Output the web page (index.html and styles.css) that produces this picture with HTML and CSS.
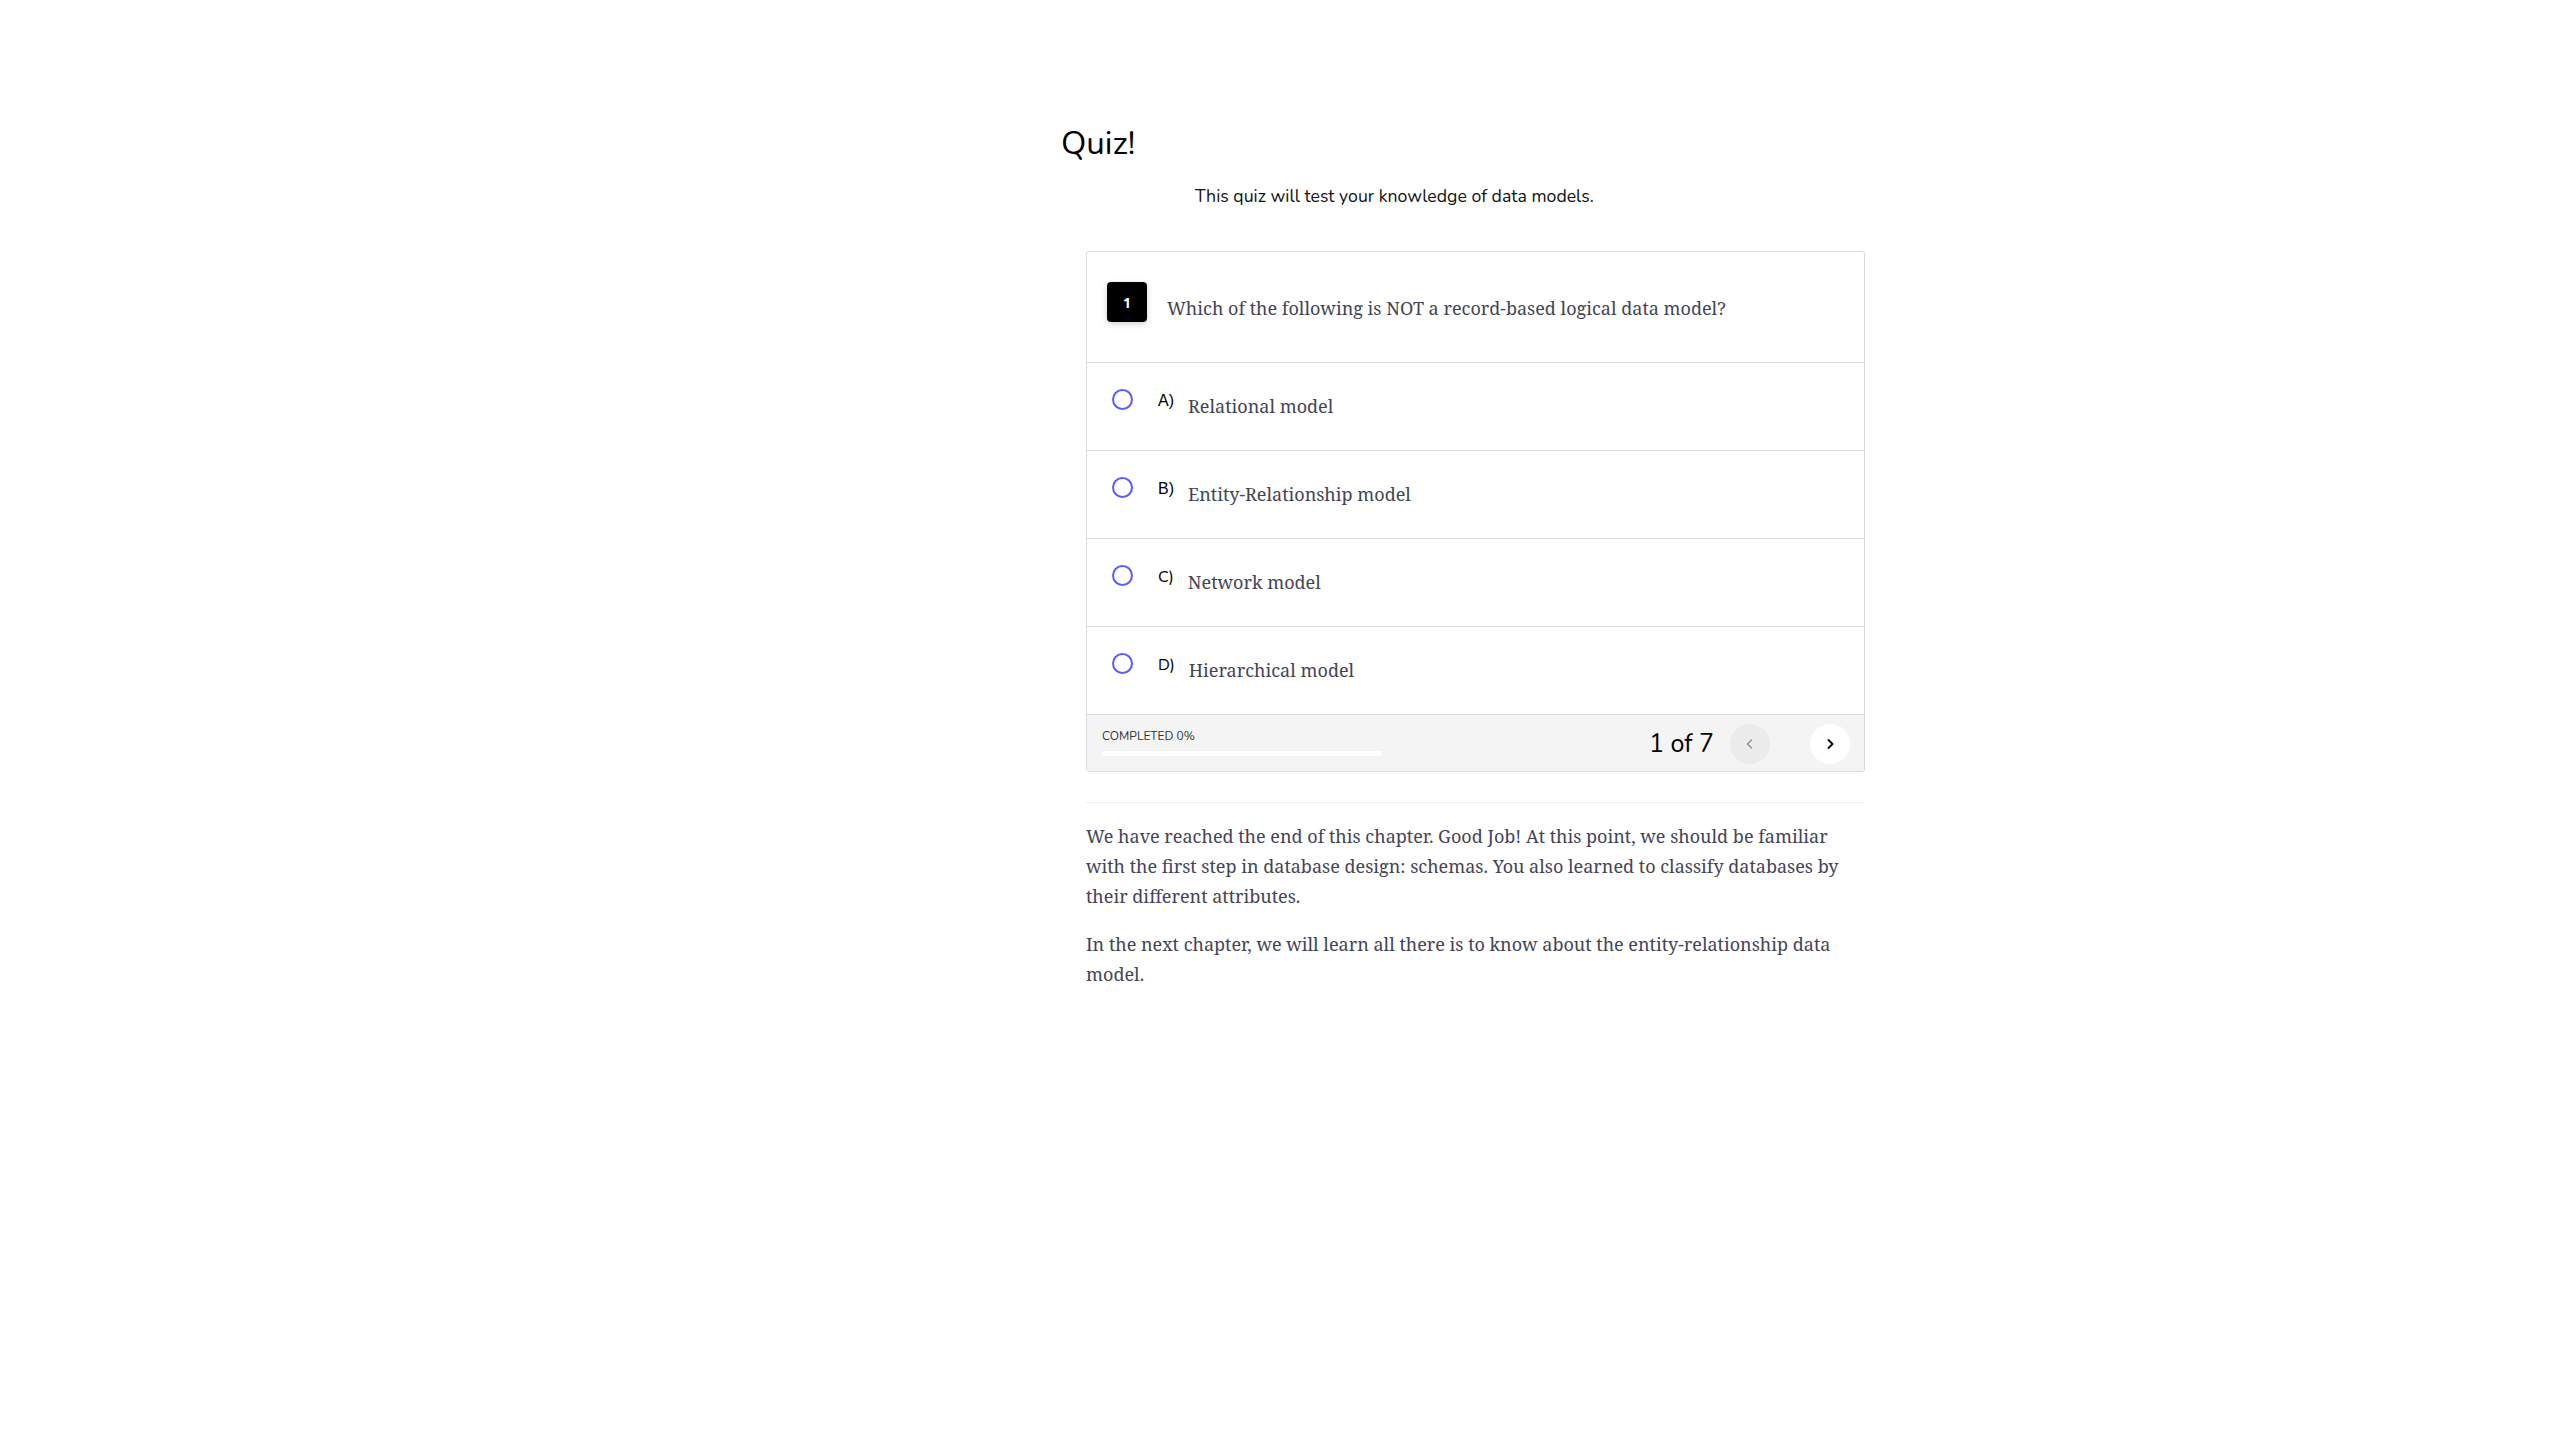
FILE: index.html
```html
<!DOCTYPE html>
<html lang="en">
<head>
<meta charset="utf-8">
<title>Quiz</title>
<link rel="stylesheet" href="styles.css">
</head>
<body>
<div class="layout">
  <div class="sidebar"></div>
  <main class="content">
    <h1 class="title">Quiz!</h1>
    <p class="subtitle">This quiz will test your knowledge of data models.</p>

    <section class="card">
      <div class="question">
        <div class="badge">1</div>
        <p class="question-text">Which of the following is NOT a record-based logical data model?</p>
      </div>

      <div class="option">
        <span class="radio"></span>
        <span class="label label-arial">A)</span>
        <span class="option-text">Relational model</span>
      </div>
      <div class="option">
        <span class="radio"></span>
        <span class="label label-arial">B)</span>
        <span class="option-text">Entity-Relationship model</span>
      </div>
      <div class="option">
        <span class="radio"></span>
        <span class="label label-round">C)</span>
        <span class="option-text">Network model</span>
      </div>
      <div class="option">
        <span class="radio"></span>
        <span class="label label-round">D)</span>
        <span class="option-text">Hierarchical model</span>
      </div>

      <div class="footer">
        <div class="progress">
          <div class="progress-label">COMPLETED 0%</div>
          <div class="progress-track"></div>
        </div>
        <div class="pager">
          <span class="pager-count">1 of 7</span>
          <button class="nav nav-prev" aria-label="Previous">
            <svg width="14" height="14" viewBox="0 0 14 14"><polyline points="8.5,3 4.5,7 8.5,11" fill="none" stroke="#8a8a8a" stroke-width="1.3" stroke-linecap="round" stroke-linejoin="round"/></svg>
          </button>
          <button class="nav nav-next" aria-label="Next">
            <svg width="14" height="14" viewBox="0 0 14 14"><polyline points="5.5,3 9.5,7 5.5,11" fill="none" stroke="#111" stroke-width="2" stroke-linecap="round" stroke-linejoin="round"/></svg>
          </button>
        </div>
      </div>
    </section>

    <hr class="divider">

    <div class="outro">
      <p>We have reached the end of this chapter. Good Job! At this point, we should be familiar with the first step in database design: schemas. You also learned to classify databases by their different attributes.</p>
      <p>In the next chapter, we will learn all there is to know about the entity-relationship data model.</p>
    </div>
  </main>
</div>
</body>
</html>
```

FILE: styles.css
```css
html, body {
  margin: 0;
  padding: 0;
  background: #ffffff;
}

body {
  font-family: "Nunito", "Lato", "Noto Sans", sans-serif;
  color: #000;
}

.layout {
  display: grid;
  grid-template-columns: 1061px 805px;
}

.content {
  padding-top: 122px;
}

.title {
  margin: 0;
  font-size: 33px;
  font-weight: 400;
  line-height: 44px;
  color: #000;
}

.subtitle {
  margin: 17px 0 0 134px;
  font-size: 17.7px;
  line-height: 26px;
  color: #111;
}

.card {
  margin: 42px 0 0 25px;
  width: 777px;
  border: 1px solid #dcdcdc;
  border-radius: 3px;
  background: #fff;
}

.question {
  display: flex;
  align-items: flex-start;
  padding: 30px 20px 40px 20px;
  border-bottom: 1px solid #dcdcdc;
}

.badge {
  flex: none;
  width: 40px;
  height: 40px;
  border-radius: 4px;
  background: #000;
  color: #fff;
  font-family: "Noto Sans", "DejaVu Sans", sans-serif;
  font-weight: 700;
  font-size: 14px;
  display: flex;
  align-items: center;
  justify-content: center;
  box-shadow: 0 2px 6px rgba(0, 0, 0, 0.18);
}

.question-text {
  margin: 14px 0 0 20px;
  font-family: "Noto Serif", "DejaVu Serif", serif;
  font-size: 18px;
  line-height: 24px;
  color: #444456;
}

.option {
  display: flex;
  align-items: flex-start;
  height: 61px;
  padding: 26px 0 0 25px;
  border-bottom: 1px solid #dcdcdc;
}

.radio {
  flex: none;
  width: 17px;
  height: 17px;
  border: 2px solid #5a5aff;
  border-radius: 50%;
}

.label {
  margin: 2px 0 0 25px;
  font-size: 16px;
  line-height: 20px;
  color: #000;
}

.label-arial {
  font-family: "Liberation Sans", Arial, sans-serif;
}

.label-round {
  font-family: "Nunito", "Lato", sans-serif;
}

.option-text {
  margin: 4px 0 0 14px;
  font-family: "Noto Serif", "DejaVu Serif", serif;
  font-size: 18px;
  line-height: 26px;
  color: #444456;
}

.footer {
  display: flex;
  align-items: center;
  justify-content: space-between;
  height: 56px;
  padding: 0 14px 0 15px;
  background: #f4f4f4;
}

.progress {
  align-self: flex-start;
  padding-top: 13px;
}

.progress-label {
  font-size: 12px;
  line-height: 17px;
  color: #333;
}

.progress-track {
  margin-top: 6px;
  width: 280px;
  height: 5px;
  border-radius: 3px;
  background: #fff;
}

.pager {
  display: flex;
  align-items: center;
  padding-top: 1px;
}

.pager-count {
  font-size: 25px;
  line-height: 32px;
  color: #000;
  margin-right: 16px;
}

.nav {
  width: 40px;
  height: 40px;
  border: none;
  padding: 0;
  border-radius: 50%;
  display: flex;
  align-items: center;
  justify-content: center;
  cursor: pointer;
}

.nav-prev {
  background: #ebebeb;
  margin-right: 40px;
}

.nav-next {
  background: #ffffff;
}

.divider {
  margin: 30px 0 0 25px;
  width: 779px;
  border: none;
  border-top: 1px solid #efefef;
  height: 0;
}

.outro {
  margin: 18px 0 0 25px;
  width: 779px;
}

.outro p {
  margin: 0 0 18px 0;
  font-family: "Noto Serif", "DejaVu Serif", serif;
  font-size: 18px;
  line-height: 30px;
  color: #444456;
}
```
